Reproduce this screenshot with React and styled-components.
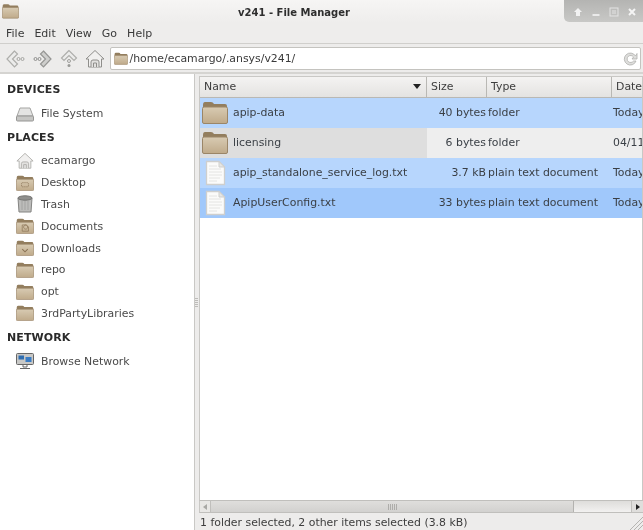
import React from 'react'
import styled, { createGlobalStyle, css } from 'styled-components'

const GlobalStyle = createGlobalStyle`
  html, body {
    margin: 0;
    padding: 0;
    background: #edeceb;
  }
  * { box-sizing: border-box; }
`

const Window = styled.div`
  width: 643px;
  height: 530px;
  display: flex;
  flex-flow: column;
  overflow: hidden;
  background: #edeceb;
  color: #3c3c3c;
  font-family: "DejaVu Sans", sans-serif;
  font-size: 10.9px;
  filter: blur(0.35px);
`

const TitleBar = styled.div`
  height: 23px;
  flex: none;
  position: relative;
  display: flex;
  align-items: center;
  justify-content: center;
  background: linear-gradient(#f6f5f4, #eeedec);
  padding: 1px 55px 0 0;
`

const Title = styled.div`
  font-weight: bold;
  color: #2e2e2e;
  font-size: 10px;
`

const AppIcon = styled.div`
  position: absolute;
  left: 2px;
  top: 3px;
`

const WindowButtons = styled.div`
  position: absolute;
  right: 0;
  top: 0;
  width: 79px;
  height: 22px;
  display: flex;
  align-items: center;
  gap: 8px;
  padding: 2px 0 0 9px;
  background: linear-gradient(#b4b4b2, #c8c8c6);
  border-bottom-left-radius: 5px;
`

const MenuBar = styled.div`
  height: 21px;
  flex: none;
  display: flex;
  align-items: center;
  gap: 10px;
  padding: 1px 6px 0;
  background: #eeedec;
  border-bottom: 1px solid #d0cfcc;
  font-size: 11px;
`

const MenuItem = styled.span`
  color: #3a3a3a;
`

const ToolBar = styled.div`
  height: 30px;
  flex: none;
  display: flex;
  align-items: center;
  padding: 1px 2px 0 5px;
  gap: 5.5px;
  background: #edeceb;
  border-bottom: 2px solid #d5d4d1;
`

const ToolIcon = styled.div`
  width: 21px;
  height: 22px;
  display: flex;
  align-items: center;
  justify-content: center;
`

const PathBox = styled.div`
  flex: 1;
  height: 23px;
  margin-left: -1.5px;
  display: flex;
  align-items: center;
  gap: 2px;
  padding: 0 2px 0 3px;
  background: #fff;
  border: 1px solid #c4c3bf;
  border-radius: 2px;
  color: #3a3a3a;
`

const PathText = styled.span`
  flex: 1;
`

const Body = styled.div`
  flex: 1;
  min-height: 0;
  display: flex;
`

const Sidebar = styled.nav`
  width: 195px;
  flex: none;
  padding-top: 3px;
  background: #fff;
  border-right: 1px solid #c9c8c5;
`

const Handle = styled.div`
  width: 3px;
  flex: none;
  display: flex;
  align-items: center;
`

const HandleDots = styled.span`
  width: 3px;
  height: 9px;
  background: repeating-linear-gradient(#bdbcb9 0 1px, transparent 1px 2px);
`

const SectionHead = styled.div`
  height: 25px;
  margin-top: ${({ $gap }) => ($gap ? '1px' : '0')};
  display: flex;
  align-items: center;
  padding-left: 7px;
  font-weight: bold;
  font-size: 11px;
  color: #2a2a2a;
  letter-spacing: 0.1px;
`

const Place = styled.div`
  height: ${({ $first }) => ($first ? '23px' : '21.8px')};
  display: flex;
  align-items: center;
  gap: 7px;
  padding-left: 16px;
  color: #4a4a4a;
`

const PlaceIcon = styled.div`
  width: 18px;
  height: 18px;
  display: flex;
  align-items: center;
  justify-content: center;
`

const Main = styled.div`
  flex: 1;
  min-width: 0;
  display: flex;
  flex-flow: column;
`

const Tree = styled.div`
  flex: 1;
  min-height: 0;
  margin-top: 2px;
  margin-left: 1px;
  overflow: hidden;
  background: #fff;
  border: 1px solid #c9c8c5;
  border-bottom: none;
`

const columns = css`
  display: grid;
  grid-template-columns: 227px 60px 125px 40px;
`

const HeaderRow = styled.div`
  ${columns}
  height: 21px;
`

const HeaderCell = styled.div`
  display: flex;
  align-items: center;
  justify-content: space-between;
  padding: 0 5px 1px 4px;
  background: linear-gradient(#f4f3f2, #e4e3e1);
  border-right: 1px solid #b9b8b4;
  border-bottom: 1px solid #b9b8b4;
  color: #3d3d3d;
  white-space: nowrap;
`

const Row = styled.div`
  ${columns}
  height: 30px;
  background: ${({ $bg }) => $bg};
`

const cell = css`
  display: flex;
  align-items: center;
  white-space: nowrap;
  padding-bottom: 1px;
  color: #3a3f45;
`

const NameCell = styled.div`
  ${cell}
  gap: 5px;
  padding-left: 2px;
  background: ${({ $bg }) => $bg || 'transparent'};
`

const FileIcon = styled.div`
  width: 26px;
  flex: none;
  display: flex;
  justify-content: center;
`

const SizeCell = styled.div`
  ${cell}
  justify-content: flex-end;
  padding-right: 1px;
`

const TypeCell = styled.div`
  ${cell}
  padding-left: 1px;
`

const DateCell = styled.div`
  ${cell}
  overflow: hidden;
  padding-left: 1px;
`

const ScrollBar = styled.div`
  height: 13px;
  flex: none;
  margin-left: 1px;
  display: flex;
  align-items: stretch;
  background: #e2e1df;
  border-top: 1px solid #c0bfbc;
  border-bottom: 1px solid #c0bfbc;
  border-left: 1px solid #c9c8c5;
`

const ScrollArrow = styled.div`
  width: ${({ $active }) => ($active ? '12px' : '11px')};
  flex: none;
  display: flex;
  align-items: center;
  justify-content: center;
  background: ${({ $active }) => ($active ? '#dfdedc' : '#e8e7e5')};
  border-right: ${({ $active }) => ($active ? 'none' : '1px solid #c0bfbc')};
  border-left: ${({ $active }) => ($active ? '1px solid #c0bfbc' : 'none')};
`

const ScrollThumb = styled.div`
  width: 363px;
  flex: none;
  display: flex;
  align-items: center;
  justify-content: center;
  gap: 1px;
  background: linear-gradient(#dfdedc, #d2d1cf);
  border-right: 1px solid #b3b2af;
`

const Grip = styled.span`
  width: 1px;
  height: 6px;
  background: #aeadaa;
`

const ScrollTrack = styled.div`
  flex: 1;
  background: linear-gradient(#dedddb, #f2f1f0);
`

const StatusBar = styled.div`
  height: 17px;
  flex: none;
  position: relative;
  display: flex;
  align-items: center;
  padding: 1px 0 0 2px;
  color: #3d3d3d;
`

const ResizeGrip = styled.svg`
  position: absolute;
  right: 0;
  bottom: 0;
`

// folder drawn with the brown gradient; mark is the small emboss on the special ones
const Folder = ({ w = 18, h = 16, mark, id = 'f' }) => (
  <svg width={w} height={h} viewBox="0 0 26 23">
    <defs>
      <linearGradient id={id} x1="0" y1="0" x2="0" y2="1">
        <stop offset="0" stopColor="#d8cbb3" />
        <stop offset="1" stopColor="#bfaa8a" />
      </linearGradient>
    </defs>
    <path d="M1 4 Q1 1 3 1 H9 Q11 1 12 3 H23 Q25 3 25 5 V10 H1 Z" fill="#937e5e" />
    <rect x="0.5" y="6" width="25" height="16.5" rx="1.5" fill={`url(#${id})`} stroke="#9b8668" />
    {mark === 'desktop' && <rect x="8" y="11" width="10" height="6" rx="1" fill="none" stroke="#8a7355" strokeDasharray="2 1" />}
    {mark === 'docs' && <path d="M9 10 H15 L18 13 V19 H9 Z M11 13 a3 3 0 1 1 0 .1" fill="none" stroke="#8a7355" />}
    {mark === 'down' && <path d="M9 13 L13 17 L17 13" fill="none" stroke="#8a7355" strokeWidth="1.5" />}
  </svg>
)

const Doc = () => (
  <svg width="21" height="26" viewBox="0 0 21 26">
    <path d="M1.5 1.5 H14 L19.5 7 V24.5 H1.5 Z" fill="#fbfbfa" stroke="#cfcfcd" strokeWidth="1.3" />
    <path d="M14 1.5 V7 H19.5 Z" fill="#e6e6e4" stroke="#cfcfcd" />
    <path d="M4 6 H12 M4 9 H16 M4 12 H17 M4 15 H17 M4 18 H15 M4 21 H12" stroke="#e4e4e2" />
  </svg>
)

const Arrow = ({ flip, dark }) => (
  <svg width="20" height="20" viewBox="0 0 20 20" style={flip ? { transform: 'scaleX(-1)' } : undefined}>
    <path
      d="M8.5 2 L1 10 L8.5 18 L11.5 15 L6.5 10 L11.5 5 Z"
      fill={dark ? '#cfcfcd' : '#ececeb'}
      stroke={dark ? '#969694' : '#aeaeab'}
      strokeWidth="1.2"
    />
    <circle cx="12.5" cy="10" r="1.5" fill="none" stroke={dark ? '#8f8f8d' : '#a5a5a2'} />
    <circle cx="16.5" cy="10" r="1.5" fill="none" stroke={dark ? '#8f8f8d' : '#a5a5a2'} />
  </svg>
)

const UpArrow = () => (
  <svg width="20" height="20" viewBox="0 0 20 20">
    <path d="M10 1.5 L2.5 9 L5 11.5 L10 6.5 L15 11.5 L17.5 9 Z" fill="#ececeb" stroke="#aeaeab" strokeWidth="1.2" />
    <circle cx="10" cy="12" r="1.5" fill="none" stroke="#a0a09d" />
    <circle cx="10" cy="16.5" r="1.5" fill="#9a9a97" />
  </svg>
)

const Home = ({ size = 20, line = '#8f8e8b' }) => (
  <svg width={size} height={size} viewBox="0 0 20 20">
    <path d="M10 1.5 L1 10 H3.5 V18 H16.5 V10 H19 Z" fill="#f1f0ef" stroke={line} />
    <path d="M6 18 V13 Q6 11 8 11 H12 Q14 11 14 13 V18 M8.5 18 V14 H11.5 V18" fill="#e2e1df" stroke={line} />
  </svg>
)

const Drive = () => (
  <svg width="18" height="16" viewBox="0 0 18 16">
    <path d="M4 2 H14 L17 10 H1 Z" fill="#e4e4e3" stroke="#a5a5a3" />
    <rect x="0.5" y="10" width="17" height="5" rx="1" fill="#c6c6c4" stroke="#969694" />
  </svg>
)

const Trash = () => (
  <svg width="16" height="18" viewBox="0 0 16 18">
    <path d="M1 3 H15 L14 17 H2 Z" fill="#bdbdbb" stroke="#848482" />
    <ellipse cx="8" cy="3" rx="7" ry="2.2" fill="#8f8f8d" stroke="#747472" />
    <path d="M5 6 V15 M8 6 V15 M11 6 V15" stroke="#a3a3a1" />
  </svg>
)

const Network = () => (
  <svg width="18" height="18" viewBox="0 0 18 18">
    <rect x="0.5" y="1.5" width="17" height="11" rx="1" fill="#c8c8c6" stroke="#666" />
    <rect x="2.5" y="3.5" width="5.5" height="4" fill="#2f6db0" />
    <rect x="9.5" y="5" width="6" height="5" fill="#3a7cc4" />
    <path d="M7 13 V15 H11 V13 M4 16.5 H14" stroke="#666" fill="none" />
  </svg>
)

const Reload = () => (
  <svg width="15" height="16" viewBox="0 0 15 16">
    <path d="M12.5 5 A6 6 0 1 0 13 10 H10.5 A3.5 3.5 0 1 1 10.5 6 L9 8 H14 V2.5 Z" fill="#dededc" stroke="#b0b0ad" strokeWidth="0.8" />
  </svg>
)

const places = [
  { name: 'ecamargo', icon: <Home size={18} line="#b0afac" /> },
  { name: 'Desktop', icon: <Folder id="p1" mark="desktop" /> },
  { name: 'Trash', icon: <Trash /> },
  { name: 'Documents', icon: <Folder id="p2" mark="docs" /> },
  { name: 'Downloads', icon: <Folder id="p3" mark="down" /> },
  { name: 'repo', icon: <Folder id="p4" /> },
  { name: 'opt', icon: <Folder id="p5" /> },
  { name: '3rdPartyLibraries', icon: <Folder id="p6" /> },
]

const files = [
  { name: 'apip-data', size: '40 bytes', type: 'folder', date: 'Today', bg: '#b7d6fd', folder: true },
  { name: 'licensing', size: '6 bytes', type: 'folder', date: '04/11', bg: '#eeeeee', nameBg: '#dedede', folder: true },
  { name: 'apip_standalone_service_log.txt', size: '3.7 kB', type: 'plain text document', date: 'Today', bg: '#b7d6fd' },
  { name: 'ApipUserConfig.txt', size: '33 bytes', type: 'plain text document', date: 'Today', bg: '#a0c8fb' },
]

export default function App() {
  return (
    <Window>
      <GlobalStyle />
      <TitleBar>
        <AppIcon><Folder id="app" w={17} h={16} /></AppIcon>
        <Title>v241 - File Manager</Title>
        <WindowButtons>
          <svg width="10" height="10" viewBox="0 0 10 10"><path d="M5 1 L9 5 H7 V9 H3 V5 H1 Z" fill="#f2f2f2" /></svg>
          <svg width="10" height="10" viewBox="0 0 10 10"><rect x="1.5" y="7" width="7" height="2" fill="#eaeaea" /></svg>
          <svg width="10" height="10" viewBox="0 0 10 10"><rect x="1" y="1" width="8" height="8" fill="none" stroke="#e4e4e4" /><rect x="3" y="3" width="4" height="4" fill="#e4e4e4" fillOpacity="0.5" /></svg>
          <svg width="10" height="10" viewBox="0 0 10 10"><path d="M2 2 L8 8 M8 2 L2 8" stroke="#f4f4f4" strokeWidth="2" /></svg>
        </WindowButtons>
      </TitleBar>
      <MenuBar>
        {['File', 'Edit', 'View', 'Go', 'Help'].map(m => <MenuItem key={m}>{m}</MenuItem>)}
      </MenuBar>
      <ToolBar>
        <ToolIcon><Arrow /></ToolIcon>
        <ToolIcon><Arrow flip dark /></ToolIcon>
        <ToolIcon><UpArrow /></ToolIcon>
        <ToolIcon><Home /></ToolIcon>
        <PathBox>
          <Folder id="path" w={14} h={13} />
          <PathText>/home/ecamargo/.ansys/v241/</PathText>
          <Reload />
        </PathBox>
      </ToolBar>
      <Body>
        <Sidebar>
          <SectionHead>DEVICES</SectionHead>
          <Place $first><PlaceIcon><Drive /></PlaceIcon>File System</Place>
          <SectionHead>PLACES</SectionHead>
          {places.map(p => <Place key={p.name}><PlaceIcon>{p.icon}</PlaceIcon>{p.name}</Place>)}
          <SectionHead $gap>NETWORK</SectionHead>
          <Place><PlaceIcon><Network /></PlaceIcon>Browse Network</Place>
        </Sidebar>
        <Handle><HandleDots /></Handle>
        <Main>
          <Tree>
            <HeaderRow>
              <HeaderCell>
                Name
                <svg width="8" height="5" viewBox="0 0 8 5"><path d="M0 0 H8 L4 5 Z" fill="#222" /></svg>
              </HeaderCell>
              <HeaderCell>Size</HeaderCell>
              <HeaderCell>Type</HeaderCell>
              <HeaderCell>Date</HeaderCell>
            </HeaderRow>
            {files.map(f => (
              <Row key={f.name} $bg={f.bg}>
                <NameCell $bg={f.nameBg}>
                  <FileIcon>
                    {f.folder ? <Folder id={f.name} w={26} h={23} /> : <Doc />}
                  </FileIcon>
                  {f.name}
                </NameCell>
                <SizeCell>{f.size}</SizeCell>
                <TypeCell>{f.type}</TypeCell>
                <DateCell>{f.date}</DateCell>
              </Row>
            ))}
          </Tree>
          <ScrollBar>
            <ScrollArrow>
              <svg width="4" height="6" viewBox="0 0 4 6"><path d="M4 0 V6 L0 3 Z" fill="#a8a8a5" /></svg>
            </ScrollArrow>
            <ScrollThumb>
              {[0, 1, 2, 3, 4].map(i => <Grip key={i} />)}
            </ScrollThumb>
            <ScrollTrack />
            <ScrollArrow $active>
              <svg width="4" height="6" viewBox="0 0 4 6"><path d="M0 0 V6 L4 3 Z" fill="#222" /></svg>
            </ScrollArrow>
          </ScrollBar>
          <StatusBar>
            1 folder selected, 2 other items selected (3.8 kB)
            <ResizeGrip width="13" height="13" viewBox="0 0 13 13">
              <path d="M13 0 L0 13 M13 4 L4 13 M13 8 L8 13" stroke="#b5b4b1" />
            </ResizeGrip>
          </StatusBar>
        </Main>
      </Body>
    </Window>
  )
}
